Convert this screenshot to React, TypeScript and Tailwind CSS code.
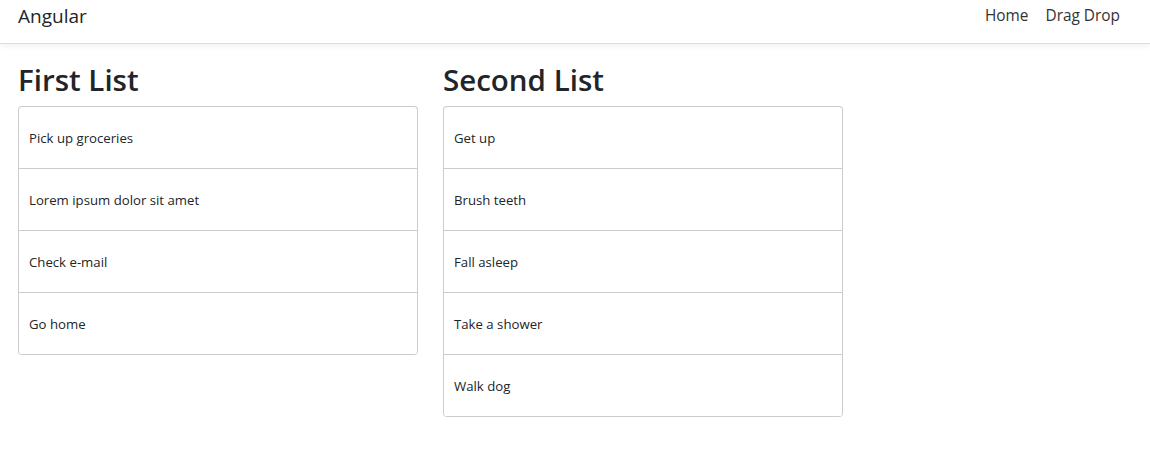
import React from "react";

const first = ["Pick up groceries", "Lorem ipsum dolor sit amet", "Check e-mail", "Go home"];
const second = ["Get up", "Brush teeth", "Fall asleep", "Take a shower", "Walk dog"];

function List({ title, items }: { title: string; items: string[] }) {
  return (
    <div className="w-[400px] mr-[25px]">
      <h2 className="text-[29.5px] leading-[38px] font-semibold mt-[1px] mb-[7px] text-[#212529]">{title}</h2>
      <div className="border-x border-t border-[#ccc] rounded-[4px] overflow-hidden">
        {items.map((t) => (
          <div
            key={t}
            className="h-[62px] px-[10px] pt-[2px] flex items-center text-[13.2px] text-[#212529] border-b border-[#ccc]"
          >
            {t}
          </div>
        ))}
      </div>
    </div>
  );
}

export default function App() {
  return (
    <div className="min-h-[471px] bg-white" style={{ fontFamily: '"Open Sans", "Noto Sans", sans-serif' }}>
      <nav className="h-[44px] flex items-start justify-between pt-[3px] pl-[18px] pr-[30px] bg-white border-b border-[#dedede] shadow-[0_2px_6px_rgba(0,0,0,0.06)]">
        <span className="text-[19px] leading-[26px] text-[#212529]">Angular</span>
        <div className="flex gap-[17px] text-[15.4px] leading-[26px] text-[#333]">
          <span>Home</span>
          <span>Drag Drop</span>
        </div>
      </nav>
      <div className="flex pt-[16px] pl-[18px]">
        <List title="First List" items={first} />
        <List title="Second List" items={second} />
      </div>
    </div>
  );
}
